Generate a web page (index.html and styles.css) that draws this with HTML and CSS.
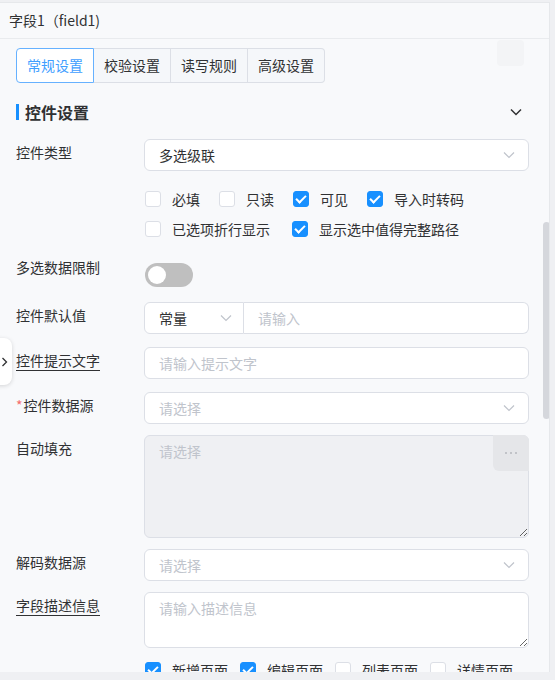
FILE: index.html
```html
<!DOCTYPE html>
<html lang="zh-CN">
<head>
    <meta charset="UTF-8">
    <meta name="viewport" content="width=device-width, initial-scale=1.0">
    <title>字段设置</title>
    <link rel="stylesheet" href="styles.css">
</head>
<body>
    <div class="panel">
        <div class="panel-head">字段1（field1)</div>

        <div class="panel-body">
            <span class="ghost-btn"></span>

            <div class="tabs">
                <div class="tab active">常规设置</div>
                <div class="tab">校验设置</div>
                <div class="tab">读写规则</div>
                <div class="tab">高级设置</div>
            </div>

            <div class="section-title">
                <span class="title-text">控件设置</span>
                <svg class="fold" width="14" height="14" viewBox="0 0 14 14"><path d="M2 4.5 7 9.5 12 4.5" fill="none" stroke="#303133" stroke-width="1.5"/></svg>
            </div>

            <div class="form">
                <div class="form-item">
                    <div class="label">控件类型</div>
                    <div class="control">
                        <div class="select">
                            <span class="value">多选级联</span>
                            <svg class="arrow" width="14" height="14" viewBox="0 0 14 14"><path d="M2 4.5 7 9.5 12 4.5" fill="none" stroke="#c0c4cc" stroke-width="1.2"/></svg>
                        </div>
                    </div>
                </div>

                <div class="form-item checks-item">
                    <div class="label"></div>
                    <div class="control">
                        <div class="check-row">
                            <span class="check"><i class="box"></i>必填</span>
                            <span class="check"><i class="box"></i>只读</span>
                            <span class="check on"><i class="box"></i>可见</span>
                            <span class="check on"><i class="box"></i>导入时转码</span>
                        </div>
                        <div class="check-row wide">
                            <span class="check"><i class="box"></i>已选项折行显示</span>
                            <span class="check on"><i class="box"></i>显示选中值得完整路径</span>
                        </div>
                    </div>
                </div>

                <div class="form-item switch-item">
                    <div class="label">多选数据限制</div>
                    <div class="control">
                        <span class="switch"><i class="knob"></i></span>
                    </div>
                </div>

                <div class="form-item">
                    <div class="label">控件默认值</div>
                    <div class="control">
                        <div class="compound">
                            <div class="select prefix">
                                <span class="value">常量</span>
                                <svg class="arrow" width="14" height="14" viewBox="0 0 14 14"><path d="M2 4.5 7 9.5 12 4.5" fill="none" stroke="#c0c4cc" stroke-width="1.2"/></svg>
                            </div>
                            <input class="input" type="text" placeholder="请输入">
                        </div>
                    </div>
                </div>

                <div class="form-item">
                    <div class="label"><span class="tip">控件提示文字</span></div>
                    <div class="control">
                        <input class="input" type="text" placeholder="请输入提示文字">
                    </div>
                </div>

                <div class="form-item tight">
                    <div class="label required">控件数据源</div>
                    <div class="control">
                        <div class="select">
                            <span class="placeholder">请选择</span>
                            <svg class="arrow" width="14" height="14" viewBox="0 0 14 14"><path d="M2 4.5 7 9.5 12 4.5" fill="none" stroke="#c0c4cc" stroke-width="1.2"/></svg>
                        </div>
                    </div>
                </div>

                <div class="form-item tight">
                    <div class="label">自动填充</div>
                    <div class="control">
                        <div class="area-wrap">
                            <textarea class="textarea fill" disabled placeholder="请选择"></textarea>
                            <span class="more">
                                <svg width="14" height="4" viewBox="0 0 14 4"><circle cx="2" cy="2" r="1" fill="#b4b7bc"/><circle cx="7" cy="2" r="1" fill="#b4b7bc"/><circle cx="12" cy="2" r="1" fill="#b4b7bc"/></svg>
                            </span>
                        </div>
                    </div>
                </div>

                <div class="form-item tight">
                    <div class="label">解码数据源</div>
                    <div class="control">
                        <div class="select">
                            <span class="placeholder">请选择</span>
                            <svg class="arrow" width="14" height="14" viewBox="0 0 14 14"><path d="M2 4.5 7 9.5 12 4.5" fill="none" stroke="#c0c4cc" stroke-width="1.2"/></svg>
                        </div>
                    </div>
                </div>

                <div class="form-item desc-item">
                    <div class="label"><span class="tip">字段描述信息</span></div>
                    <div class="control">
                        <textarea class="textarea desc" placeholder="请输入描述信息"></textarea>
                    </div>
                </div>

                <div class="form-item">
                    <div class="label"></div>
                    <div class="control">
                        <div class="check-row pages">
                            <span class="check on"><i class="box"></i>新增页面</span>
                            <span class="check on"><i class="box"></i>编辑页面</span>
                            <span class="check"><i class="box"></i>列表页面</span>
                            <span class="check"><i class="box"></i>详情页面</span>
                        </div>
                    </div>
                </div>
            </div>
        </div>

        <span class="scrollbar"></span>
        <span class="collapse">
            <svg width="8" height="10" viewBox="0 0 8 10"><path d="M1.5 1 5.5 5 1.5 9" fill="none" stroke="#303133" stroke-width="1.3"/></svg>
        </span>
    </div>
</body>
</html>
```

FILE: styles.css
```css
* {
    box-sizing: border-box;
}
html, body {
    margin: 0;
    padding: 0;
}
body {
    background: #eff0f3;
    font-family: "Noto Sans CJK SC", "Noto Sans", sans-serif;
    font-size: 14px;
    color: #303133;
    padding-top: 2px;
}
.panel {
    position: relative;
    width: 550px;
    height: 670px;
    overflow: hidden;
    background: #f8f9fb;
    border-top: 1px solid #e6e8eb;
    border-right: 1px solid #e6e8eb;
}
.panel-head {
    height: 36px;
    line-height: 35px;
    padding-left: 9px;
    border-bottom: 1px solid #e9ebee;
}
.panel-body {
    position: relative;
    padding: 9px 20px 0 16px;
}
.ghost-btn {
    position: absolute;
    top: 1px;
    left: 497px;
    width: 27px;
    height: 26px;
    border-radius: 4px;
    background: #f3f4f6;
}

/* tabs */
.tabs {
    display: flex;
}
.tab {
    height: 35px;
    line-height: 33px;
    padding: 0 10px;
    background: #f5f7fa;
    border: 1px solid #dcdfe6;
    border-left: none;
}
.tab:first-child {
    border-left: 1px solid #dcdfe6;
    border-radius: 4px 0 0 4px;
}
.tab:last-child {
    border-radius: 0 4px 4px 0;
}
.tab.active {
    background: #fff;
    color: #409eff;
    border-color: #66b1ff;
    border-left: 1px solid #66b1ff;
}

/* section */
.section-title {
    display: flex;
    align-items: center;
    justify-content: space-between;
    height: 26px;
    margin-top: 16px;
    margin-bottom: 14px;
}
.title-text {
    font-size: 16px;
    font-weight: bold;
    border-left: 3px solid #1890ff;
    padding-left: 6px;
    line-height: 16px;
}
.fold {
    margin-right: 6px;
}

/* form rows */
.form-item {
    display: flex;
    margin-bottom: 13px;
}
.form-item.tight {
    margin-bottom: 11px;
}
.form-item.desc-item {
    margin-bottom: 7px;
}
.label {
    width: 128px;
    flex-shrink: 0;
    line-height: 26px;
}
.label.required::before {
    content: "*";
    color: #f56c6c;
    margin-right: 1px;
}
.tip {
    text-decoration: underline;
    text-underline-offset: 4px;
}
.control {
    width: 385px;
}
.select {
    display: flex;
    align-items: center;
    justify-content: space-between;
    height: 32px;
    padding: 0 12px 0 14px;
    background: #fff;
    border: 1px solid #dcdfe6;
    border-radius: 6px;
}
.placeholder {
    color: #c0c4cc;
}
.input {
    display: block;
    width: 100%;
    height: 32px;
    padding: 0 14px;
    font: inherit;
    color: #303133;
    background: #fff;
    border: 1px solid #dcdfe6;
    border-radius: 6px;
    outline: none;
}
.input::placeholder, .textarea::placeholder {
    color: #c0c4cc;
}
.compound {
    display: flex;
}
.compound .prefix {
    width: 100px;
    flex-shrink: 0;
    border-radius: 6px 0 0 6px;
    padding-right: 10px;
}
.compound .input {
    border-left: none;
    border-radius: 0 6px 6px 0;
}
.textarea {
    display: block;
    width: 100%;
    padding: 5px 14px;
    font: inherit;
    line-height: 20px;
    color: #303133;
    background: #fff;
    border: 1px solid #dcdfe6;
    border-radius: 6px;
    outline: none;
    resize: vertical;
}
.textarea.fill {
    height: 103px;
    background: #eff0f3;
}
.textarea.desc {
    height: 56px;
}
.area-wrap {
    position: relative;
}
.more {
    position: absolute;
    top: 0;
    right: 0;
    width: 36px;
    height: 36px;
    display: flex;
    align-items: center;
    justify-content: center;
    background: #e5e6e9;
    border-radius: 0 6px 0 6px;
}

/* checkboxes */
.checks-item {
    margin-bottom: 10px;
}
.check-row {
    display: flex;
    align-items: center;
    height: 30px;
    padding-left: 1px;
}
.check {
    display: flex;
    align-items: center;
    margin-right: 19px;
}
.wide .check {
    margin-right: 22px;
}
.pages .check {
    margin-right: 12px;
}
.box {
    width: 16px;
    height: 16px;
    margin-right: 11px;
    background: #fff;
    border: 1px solid #dcdfe6;
    border-radius: 3px;
    position: relative;
}
.check.on .box {
    background: #1890ff;
    border-color: #1890ff;
}
.check.on .box::after {
    content: "";
    position: absolute;
    left: 4px;
    top: 1px;
    width: 4px;
    height: 8px;
    border: solid #fff;
    border-width: 0 2px 2px 0;
    transform: rotate(45deg);
}

/* switch */
.switch-item {
    height: 35px;
}
.switch {
    display: block;
    width: 48px;
    height: 24px;
    margin-top: 9px;
    margin-left: 1px;
    border-radius: 12px;
    background: #bfbfbf;
    position: relative;
}
.knob {
    position: absolute;
    left: 3px;
    top: 3px;
    width: 18px;
    height: 18px;
    border-radius: 50%;
    background: #fff;
}

/* overlay bits */
.scrollbar {
    position: absolute;
    left: 543px;
    top: 219px;
    width: 7px;
    height: 197px;
    border-radius: 4px;
    background: #d5d7dc;
}
.collapse {
    position: absolute;
    left: -4px;
    top: 335px;
    width: 16px;
    height: 47px;
    display: flex;
    align-items: center;
    justify-content: flex-start;
    padding-left: 5px;
    background: #fff;
    border-radius: 0 8px 8px 0;
    box-shadow: 0 1px 4px rgba(0, 0, 0, 0.15);
}
```
